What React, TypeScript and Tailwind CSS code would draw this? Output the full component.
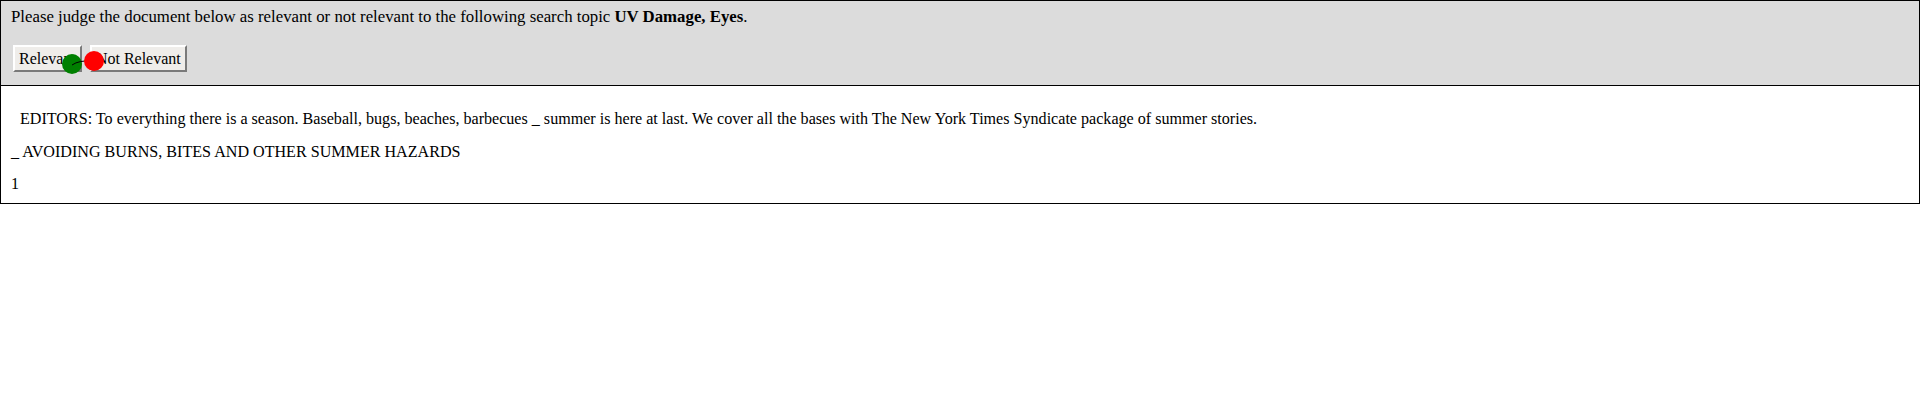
export default function App() {
  return (
    <div className="w-[1920px] h-[400px] bg-white text-black font-['Liberation_Serif',serif] text-[16px] leading-[18px]">
      <div className="border border-black">
        {/* Judging header */}
        <div className="relative bg-[#dcdcdc] border-b border-black pl-[10px] pt-[7px] pb-[13px]">
          <p className="text-[16.8px]">
            Please judge the document below as relevant or not relevant to the following search topic{" "}
            <b>UV Damage, Eyes</b>.
          </p>
          <div className="mt-[19px] ml-[2px] flex gap-2">
            <button className="h-[27px] px-[4px] bg-[#efedea] border-2 border-t-white border-l-white border-r-[#7a7a7a] border-b-[#7a7a7a] text-black">
              Relevant
            </button>
            <button className="h-[27px] px-[4px] bg-[#efedea] border-2 border-t-white border-l-white border-r-[#7a7a7a] border-b-[#7a7a7a] text-black">
              Not Relevant
            </button>
          </div>
          {/* click markers */}
          <svg className="absolute left-0 top-0" width="120" height="84" viewBox="0 0 120 84">
            <circle cx="71" cy="63" r="10" fill="#008000" />
            <path d="M71 64 Q78 59 92 60" fill="none" stroke="#000" strokeWidth="1" />
            <circle cx="93" cy="60" r="10" fill="#ff0000" />
          </svg>
        </div>

        {/* Document */}
        <div className="pl-[10px] pt-[24px] pb-[10px]">
          <p className="pl-[9px] text-[16.1px]">
            EDITORS: To everything there is a season. Baseball, bugs, beaches, barbecues _ summer is here at last. We cover all the bases with The New York Times Syndicate package of summer stories.
          </p>
          <p className="mt-[15px] text-[16.1px]">_ AVOIDING BURNS, BITES AND OTHER SUMMER HAZARDS</p>
          <p className="mt-[14px]">1</p>
        </div>
      </div>
    </div>
  );
}
